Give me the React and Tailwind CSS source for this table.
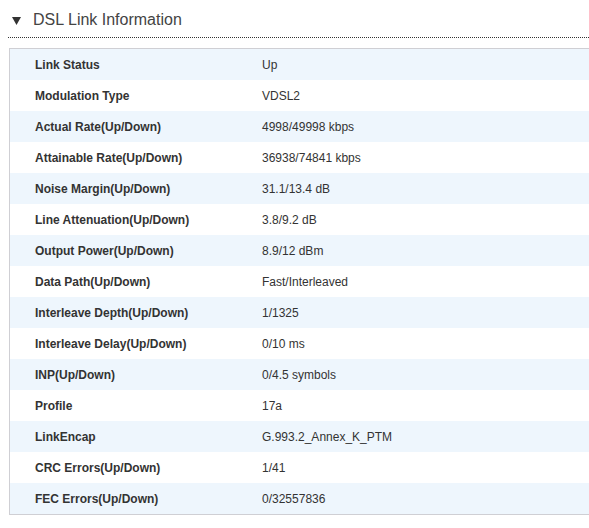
import React from 'react';

// DSL line stats, label/value pairs
const rows = [
  ['Link Status', 'Up'],
  ['Modulation Type', 'VDSL2'],
  ['Actual Rate(Up/Down)', '4998/49998 kbps'],
  ['Attainable Rate(Up/Down)', '36938/74841 kbps'],
  ['Noise Margin(Up/Down)', '31.1/13.4 dB'],
  ['Line Attenuation(Up/Down)', '3.8/9.2 dB'],
  ['Output Power(Up/Down)', '8.9/12 dBm'],
  ['Data Path(Up/Down)', 'Fast/Interleaved'],
  ['Interleave Depth(Up/Down)', '1/1325'],
  ['Interleave Delay(Up/Down)', '0/10 ms'],
  ['INP(Up/Down)', '0/4.5 symbols'],
  ['Profile', '17a'],
  ['LinkEncap', 'G.993.2_Annex_K_PTM'],
  ['CRC Errors(Up/Down)', '1/41'],
  ['FEC Errors(Up/Down)', '0/32557836'],
];

const App = () => {
  return (
    <div className="w-[589px] h-[528px] bg-white overflow-hidden font-['Liberation_Sans',Arial,sans-serif]">
      {/* section header */}
      <div className="ml-[8px] h-[38px] border-b border-dotted border-[#333] flex items-start pt-[10px]">
        <svg width="9" height="8" viewBox="0 0 9 8" className="ml-[4px] mt-[7px]">
          <path d="M0 0 L9 0 L4.5 8 Z" fill="#333" />
        </svg>
        <span className="ml-[12px] text-[16px] leading-[20px] text-[#444]">DSL Link Information</span>
      </div>

      {/* info table */}
      <div className="mt-[10px] ml-[9px] border-l border-t border-b border-[#cfcfd4]">
        {rows.map(([label, value], i) => (
          <div
            key={label}
            className={`flex items-center h-[31px] text-[12px] leading-[14px] text-[#333] ${i % 2 === 0 ? 'bg-[#eef6fd]' : 'bg-white'}`}
          >
            <div className="w-[252px] pl-[25px] font-bold">{label}</div>
            <div>{value}</div>
          </div>
        ))}
      </div>
    </div>
  );
};

export default App;
